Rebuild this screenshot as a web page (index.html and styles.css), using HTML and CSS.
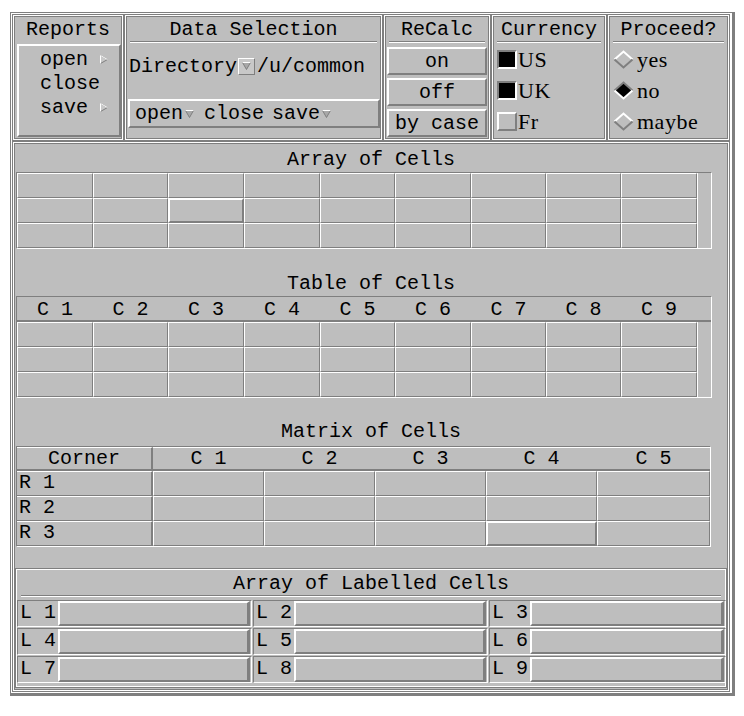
FILE: index.html
```html
<!DOCTYPE html>
<html lang="en">

<head>
    <meta charset="UTF-8">
    <title>Widgets</title>
    <link rel="stylesheet" href="styles.css">
</head>

<body>
    <div class="frame">
        <div class="top">
            <div class="box reports">
                <div class="in">
                    <div class="title">Reports</div>
                    <div class="menu raised">
                        <div class="item"><span class="lbl">open</span><svg width="8" height="9" viewBox="0 0 8 9"><polygon points="0.5,0.5 7.5,4.5 0.5,8.5" fill="#c8c8c8" stroke="#7f7f7f"/><polyline points="0.5,8.5 0.5,0.5 7.5,4.5" fill="none" stroke="#fff"/></svg></div>
                        <div class="item"><span class="lbl">close</span></div>
                        <div class="item"><span class="lbl">save</span><svg width="8" height="9" viewBox="0 0 8 9"><polygon points="0.5,0.5 7.5,4.5 0.5,8.5" fill="#c8c8c8" stroke="#7f7f7f"/><polyline points="0.5,8.5 0.5,0.5 7.5,4.5" fill="none" stroke="#fff"/></svg></div>
                    </div>
                </div>
            </div>
            <div class="box data">
                <div class="in">
                    <div class="title ul">Data Selection</div>
                    <div class="dir">
                        <span>Directory</span>
                        <span class="opt"><svg width="9" height="8" viewBox="0 0 9 8"><polygon points="0.5,0.5 8.5,0.5 4.5,7.5" fill="#a8a8a8" stroke="#7f7f7f"/><line x1="0.5" y1="0.5" x2="8.5" y2="0.5" stroke="#fff"/></svg></span>
                        <span class="path">/u/common</span>
                    </div>
                    <div class="bar raised">
                        <span>open</span>
                        <svg class="dn" width="9" height="8" viewBox="0 0 9 8"><polygon points="0.5,0.5 8.5,0.5 4.5,7.5" fill="#a8a8a8" stroke="#7f7f7f"/><line x1="0.5" y1="0.5" x2="8.5" y2="0.5" stroke="#fff"/></svg>
                        <span class="sp">close</span>
                        <span class="sp2">save</span>
                        <svg class="dn" width="9" height="8" viewBox="0 0 9 8"><polygon points="0.5,0.5 8.5,0.5 4.5,7.5" fill="#a8a8a8" stroke="#7f7f7f"/><line x1="0.5" y1="0.5" x2="8.5" y2="0.5" stroke="#fff"/></svg>
                    </div>
                </div>
            </div>
            <div class="box recalc">
                <div class="in">
                    <div class="title ul">ReCalc</div>
                    <div class="btns">
                        <div class="btn raised">on</div>
                        <div class="btn raised">off</div>
                        <div class="btn raised">by case</div>
                    </div>
                </div>
            </div>
            <div class="box currency">
                <div class="in">
                    <div class="title ul">Currency</div>
                    <div class="opts">
                        <div class="row"><span class="chk"></span><span class="serif">US</span></div>
                        <div class="row"><span class="chk"></span><span class="serif">UK</span></div>
                        <div class="row"><span class="chk off"></span><span class="serif">Fr</span></div>
                    </div>
                </div>
            </div>
            <div class="box proceed">
                <div class="in">
                    <div class="title ul">Proceed?</div>
                    <div class="opts">
                        <div class="row"><svg class="dia" width="21" height="19" viewBox="0 0 21 19"><polygon points="10.5,1.5 19.5,9.5 10.5,17.5 1.5,9.5" fill="#bebebe"/><polyline points="1.5,9.5 10.5,1.5 19.5,9.5" fill="none" stroke="#fff" stroke-width="2"/><polyline points="1.5,9.5 10.5,17.5 19.5,9.5" fill="none" stroke="#7f7f7f" stroke-width="2"/></svg><span class="serif">yes</span></div>
                        <div class="row"><svg class="dia" width="21" height="19" viewBox="0 0 21 19"><polygon points="10.5,1.5 19.5,9.5 10.5,17.5 1.5,9.5" fill="#000"/><polyline points="1.5,9.5 10.5,1.5 19.5,9.5" fill="none" stroke="#7f7f7f" stroke-width="2"/><polyline points="1.5,9.5 10.5,17.5 19.5,9.5" fill="none" stroke="#fff" stroke-width="2"/></svg><span class="serif">no</span></div>
                        <div class="row"><svg class="dia" width="21" height="19" viewBox="0 0 21 19"><polygon points="10.5,1.5 19.5,9.5 10.5,17.5 1.5,9.5" fill="#bebebe"/><polyline points="1.5,9.5 10.5,1.5 19.5,9.5" fill="none" stroke="#fff" stroke-width="2"/><polyline points="1.5,9.5 10.5,17.5 19.5,9.5" fill="none" stroke="#7f7f7f" stroke-width="2"/></svg><span class="serif">maybe</span></div>
                    </div>
                </div>
            </div>
        </div>

        <div class="box main">
            <div class="in">
                <div class="head1">Array of Cells</div>
                <div class="grid">
                    <div class="cells">
                        <div class="c"></div><div class="c"></div><div class="c"></div><div class="c"></div><div class="c"></div><div class="c"></div><div class="c"></div><div class="c"></div><div class="c"></div>
                        <div class="c"></div><div class="c"></div><div class="c sel"></div><div class="c"></div><div class="c"></div><div class="c"></div><div class="c"></div><div class="c"></div><div class="c"></div>
                        <div class="c"></div><div class="c"></div><div class="c"></div><div class="c"></div><div class="c"></div><div class="c"></div><div class="c"></div><div class="c"></div><div class="c"></div>
                    </div>
                    <div class="strip"></div>
                </div>

                <div class="head1 gap">Table of Cells</div>
                <div class="grid table">
                    <div class="thead">
                        <span>C 1</span><span>C 2</span><span>C 3</span><span>C 4</span><span>C 5</span><span>C 6</span><span>C 7</span><span>C 8</span><span>C 9</span>
                    </div>
                    <div class="tbody">
                        <div class="cells">
                            <div class="c"></div><div class="c"></div><div class="c"></div><div class="c"></div><div class="c"></div><div class="c"></div><div class="c"></div><div class="c"></div><div class="c"></div>
                            <div class="c"></div><div class="c"></div><div class="c"></div><div class="c"></div><div class="c"></div><div class="c"></div><div class="c"></div><div class="c"></div><div class="c"></div>
                            <div class="c"></div><div class="c"></div><div class="c"></div><div class="c"></div><div class="c"></div><div class="c"></div><div class="c"></div><div class="c"></div><div class="c"></div>
                        </div>
                        <div class="strip"></div>
                    </div>
                </div>

                <div class="head1 gap2">Matrix of Cells</div>
                <div class="matrix">
                    <div class="mh corner">Corner</div><div class="mh">C 1</div><div class="mh">C 2</div><div class="mh">C 3</div><div class="mh">C 4</div><div class="mh">C 5</div>
                    <div class="rl">R 1</div><div class="c"></div><div class="c"></div><div class="c"></div><div class="c"></div><div class="c"></div>
                    <div class="rl">R 2</div><div class="c"></div><div class="c"></div><div class="c"></div><div class="c"></div><div class="c"></div>
                    <div class="rl">R 3</div><div class="c"></div><div class="c"></div><div class="c"></div><div class="c sel"></div><div class="c"></div>
                </div>

                <div class="labelled">
                    <div class="ltitle">Array of Labelled Cells</div>
                    <div class="lgrid">
                        <div class="litem"><span class="lname">L 1</span><span class="entry"></span></div>
                        <div class="litem"><span class="lname">L 2</span><span class="entry"></span></div>
                        <div class="litem"><span class="lname">L 3</span><span class="entry"></span></div>
                        <div class="litem"><span class="lname">L 4</span><span class="entry"></span></div>
                        <div class="litem"><span class="lname">L 5</span><span class="entry"></span></div>
                        <div class="litem"><span class="lname">L 6</span><span class="entry"></span></div>
                        <div class="litem"><span class="lname">L 7</span><span class="entry"></span></div>
                        <div class="litem"><span class="lname">L 8</span><span class="entry"></span></div>
                        <div class="litem"><span class="lname">L 9</span><span class="entry"></span></div>
                    </div>
                </div>
            </div>
        </div>
    </div>
</body>

</html>
```

FILE: styles.css
```css
* {
    box-sizing: border-box;
}

body {
    margin: 0;
    background: #fff;
    color: #000;
    font-family: "Liberation Mono", monospace;
    font-size: 20px;
}

.frame {
    width: 725px;
    margin: 12px 0 0 10px;
    padding: 1px 2px 1px 1px;
    border-style: solid;
    border-color: #7f7f7f;
    border-width: 1px 3px 3px 1px;
    background: #fff;
}

.top {
    display: flex;
    height: 127px;
}

.box {
    border: 1px solid #7f7f7f;
    padding: 1px;
    background: #fff;
}

.in {
    height: 100%;
    border: 1px solid #7f7f7f;
    background: #bebebe;
}

.raised {
    border: 2px solid;
    border-color: #fff #7f7f7f #7f7f7f #fff;
}

.reports { width: 112px; }
.data { width: 259px; }
.recalc { width: 108px; }
.currency { width: 116px; }
.proceed { width: 123px; }

.title {
    height: 25px;
    padding-top: 2px;
    line-height: 22px;
    text-align: center;
    white-space: nowrap;
}

.title.ul {
    margin: 0 3px;
    border-bottom: 1px solid #7f7f7f;
    box-shadow: 0 1px 0 #fff;
}

/* reports menu */
.menu {
    width: 104px;
    height: 93px;
    margin: 2px 0 0 2px;
    padding-top: 1px;
}

.item {
    display: flex;
    align-items: center;
    height: 24px;
    padding-left: 21px;
}

.item .lbl {
    width: 60px;
}

/* data selection */
.dir {
    display: flex;
    align-items: center;
    height: 24px;
    margin-top: 12px;
    padding-left: 2px;
}

.opt {
    display: flex;
    align-items: center;
    justify-content: center;
    width: 17px;
    height: 17px;
    margin-left: 1px;
    border: 1px solid;
    border-color: #fff #7f7f7f #7f7f7f #fff;
    background: #c8c8c8;
}

.path {
    margin-left: 2px;
}

.bar {
    display: flex;
    align-items: center;
    width: 252px;
    height: 29px;
    margin: 21px 0 0 1px;
    padding-left: 5px;
}

.bar .dn {
    margin-left: 2px;
}

.bar .sp {
    margin-left: 10px;
}

.bar .sp2 {
    margin-left: 8px;
}

/* recalc */
.btns {
    margin-top: 5px;
}

.btn {
    height: 28px;
    margin: 0 1px 3px;
    padding-top: 1px;
    line-height: 23px;
    text-align: center;
}

/* currency / proceed */
.opts {
    margin-top: 2px;
    padding-left: 3px;
}

.row {
    display: flex;
    align-items: center;
    height: 31px;
}

.serif {
    font-family: "Liberation Serif", serif;
    font-size: 22px;
    letter-spacing: 0.5px;
}

.chk {
    width: 20px;
    height: 19px;
    margin-right: 1px;
    border: 2px solid;
    border-color: #7f7f7f #fff #fff #7f7f7f;
    background: #000;
}

.chk.off {
    border-color: #fff #7f7f7f #7f7f7f #fff;
    background: #bebebe;
}

.dia {
    margin-right: 3px;
}

/* main panel */
.main {
    height: 551px;
}

.head1 {
    height: 26px;
    margin-top: 2px;
    padding-top: 2px;
    line-height: 24px;
    text-align: center;
}

.head1.gap {
    margin-top: 21px;
}

.head1.gap2 {
    margin-top: 20px;
}

.grid {
    display: flex;
    width: 696px;
    margin-left: 1px;
    border: 1px solid;
    border-color: #7f7f7f #fff #fff #7f7f7f;
}

.cells {
    display: grid;
    grid-template-columns: 76px 75px 76px 76px 75px 76px 75px 75px 76px;
    grid-auto-rows: 25px;
}

.c {
    border: 1px solid;
    border-color: #fff #7f7f7f #7f7f7f #fff;
}

.c.sel {
    border-width: 2px;
}

.strip {
    flex: 1;
    border-left: 1px solid #fff;
}

.table {
    flex-direction: column;
}

.thead {
    display: grid;
    grid-template-columns: 76px 75px 76px 76px 75px 76px 75px 75px 76px;
    height: 25px;
    padding-top: 2px;
    border-bottom: 2px solid #7f7f7f;
    line-height: 21px;
    text-align: center;
}

.tbody {
    display: flex;
}

.matrix {
    display: grid;
    grid-template-columns: 136px 111px 111px 111px 111px 113px;
    grid-template-rows: 24px 25px 25px 25px;
    width: 695px;
    margin: 2px 0 0 1px;
    border: 1px solid;
    border-color: #7f7f7f #fff #fff #7f7f7f;
}

.mh {
    padding-top: 1px;
    border-top: 1px solid #fff;
    border-bottom: 2px solid #7f7f7f;
    line-height: 20px;
    text-align: center;
}

.mh.corner {
    border-right: 2px solid #7f7f7f;
}

.rl {
    padding-left: 2px;
    border-top: 1px solid #fff;
    border-bottom: 1px solid #7f7f7f;
    border-right: 2px solid #7f7f7f;
    line-height: 22px;
}

/* labelled cells */
.labelled {
    width: 712px;
    height: 120px;
    margin-top: 21px;
    padding: 0 1px;
    border: 1px solid #7f7f7f;
    box-shadow: inset 1px 1px 0 #fff, inset -1px -1px 0 #fff;
}

.ltitle {
    height: 27px;
    margin: 0 4px;
    padding-top: 4px;
    line-height: 21px;
    text-align: center;
    border-bottom: 1px solid #7f7f7f;
    box-shadow: 0 1px 0 #fff;
}

.lgrid {
    display: grid;
    grid-template-columns: 235px 235px 237px;
    grid-auto-rows: 27px;
    column-gap: 1px;
    row-gap: 1px;
    margin-top: 4px;
}

.litem {
    display: flex;
    border: 1px solid;
    border-color: #7f7f7f #fff #fff #7f7f7f;
}

.lname {
    width: 40px;
    padding-left: 2px;
    line-height: 24px;
    white-space: pre;
}

.entry {
    flex: 1;
    margin-right: 1px;
    border-style: solid;
    border-color: #fff #7f7f7f #7f7f7f #fff;
    border-width: 2px 3px 2px 2px;
}
```
